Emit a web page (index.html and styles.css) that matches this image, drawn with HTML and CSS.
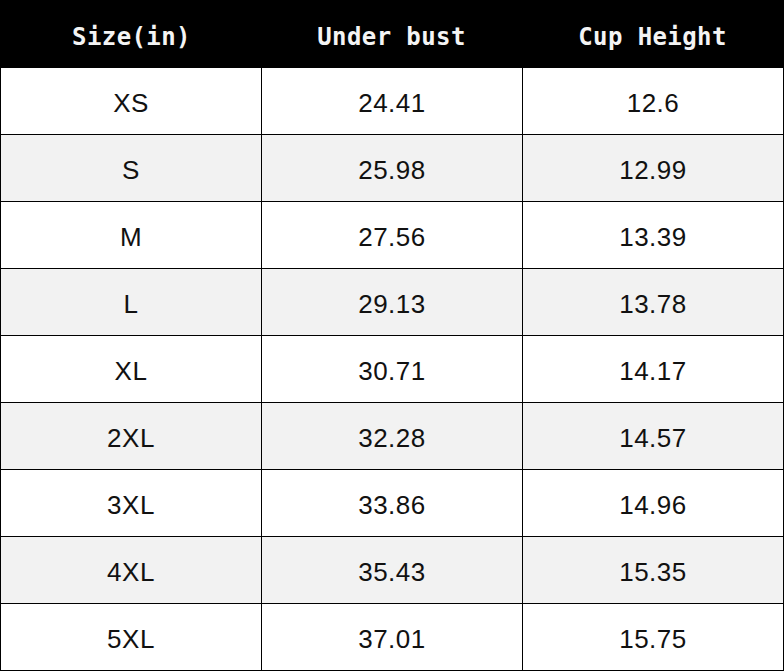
FILE: index.html
```html
<!DOCTYPE html>
<html>
<head>
<meta charset="utf-8">
<link rel="stylesheet" href="styles.css">
</head>
<body>
<div class="table">
  <div class="row head">
    <div class="cell">Size(in)</div>
    <div class="cell">Under bust</div>
    <div class="cell">Cup Height</div>
  </div>
  <div class="row"><div class="cell">XS</div><div class="cell">24.41</div><div class="cell">12.6</div></div>
  <div class="row alt"><div class="cell">S</div><div class="cell">25.98</div><div class="cell">12.99</div></div>
  <div class="row"><div class="cell">M</div><div class="cell">27.56</div><div class="cell">13.39</div></div>
  <div class="row alt"><div class="cell">L</div><div class="cell">29.13</div><div class="cell">13.78</div></div>
  <div class="row"><div class="cell">XL</div><div class="cell">30.71</div><div class="cell">14.17</div></div>
  <div class="row alt"><div class="cell">2XL</div><div class="cell">32.28</div><div class="cell">14.57</div></div>
  <div class="row"><div class="cell">3XL</div><div class="cell">33.86</div><div class="cell">14.96</div></div>
  <div class="row alt"><div class="cell">4XL</div><div class="cell">35.43</div><div class="cell">15.35</div></div>
  <div class="row"><div class="cell">5XL</div><div class="cell">37.01</div><div class="cell">15.75</div></div>
</div>
</body>
</html>
```
FILE: styles.css
```css
html, body {
  margin: 0;
  padding: 0;
  background: #ffffff;
}
.table {
  width: 784px;
}
.row {
  display: grid;
  grid-template-columns: 261px 261px 261px;
  height: 67px;
  box-sizing: border-box;
  border-left: 1px solid #000;
  border-bottom: 1px solid #000;
  background: #ffffff;
}
.row.alt {
  background: #f2f2f2;
}
.cell {
  box-sizing: border-box;
  border-right: 1px solid #000;
  display: flex;
  align-items: center;
  justify-content: center;
  padding-top: 4px;
  font-family: "Liberation Sans", Arial, sans-serif;
  font-size: 26px;
  letter-spacing: 0.5px;
  color: #111;
}
.row.head {
  height: 68px;
  background: #000;
  border: none;
}
.row.head .cell {
  border-right: none;
  padding-top: 6px;
  font-family: "DejaVu Sans Mono", monospace;
  font-weight: bold;
  font-size: 24px;
  letter-spacing: 0.4px;
  color: #f4f4f4;
}
.row.head .cell:first-child {
  padding-left: 2px;
}
```
